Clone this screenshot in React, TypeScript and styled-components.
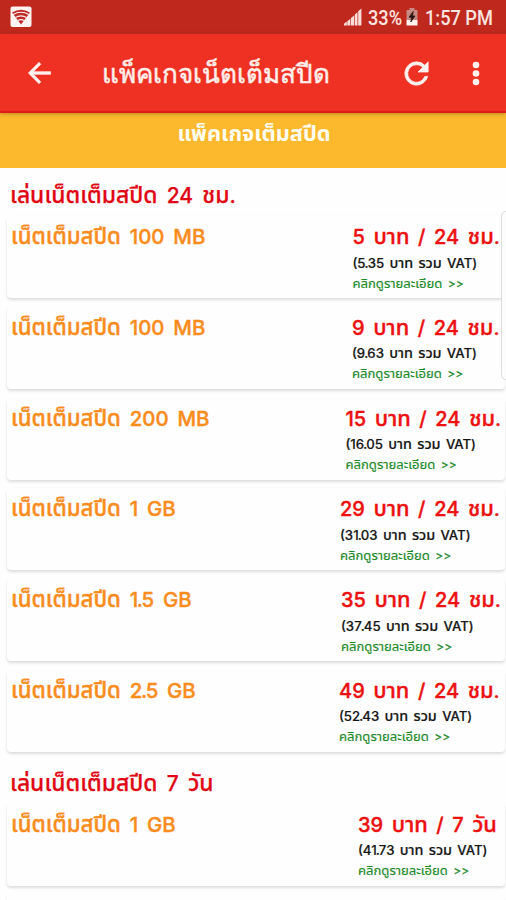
import React from "react";
import styled, { createGlobalStyle } from "styled-components";

const Global = createGlobalStyle`
  * { box-sizing: border-box; }
  body { margin: 0; background: #fff; overflow: hidden; font-family: Inter, "Noto Sans Thai", sans-serif; }
`;

const Screen = styled.div`
  position: relative;
  width: 506px;
  height: 900px;
  overflow: hidden;
  background: #fefefe;
`;

const StatusBar = styled.header`
  height: 34px;
  padding: 0 13px 0 10px;
  background: #be281d;
  display: flex;
  align-items: center;
  color: #fbe4e0;
`;

const StatusSpacer = styled.div`
  flex: 1;
`;

const StatusText = styled.span<{ $width: number }>`
  width: ${(p) => p.$width}px;
  font: 500 20px/34px Roboto, sans-serif;
  white-space: nowrap;
  padding-top: 2px;
  transform: scaleX(0.91);
  transform-origin: 0 50%;
`;

const StatusIcon = styled.svg<{ $gap: number }>`
  display: block;
  flex: none;
  margin-right: ${(p) => p.$gap}px;
`;

const AppBar = styled.nav`
  position: relative;
  z-index: 1;
  height: 79px;
  background: #ef3124;
  border-bottom: 2px solid #e01a1c;
  box-shadow: 0 1px 4px rgba(90, 60, 0, 0.4);
  display: flex;
  align-items: center;
  padding: 1px 24px 0 23px;
`;

const IconButton = styled.button`
  border: 0;
  padding: 0;
  background: none;
  display: flex;
  color: #fff1ef;
`;

const Title = styled.h1`
  flex: 1;
  margin: 2px 0 0 47px;
  font: 400 26px/40px Roboto, sans-serif;
  color: #ffeeea;
  white-space: nowrap;
  -webkit-text-stroke: 0.5px #ffeeea;
`;

const Actions = styled.div`
  display: flex;
  gap: 36px;
`;

const Banner = styled.div`
  height: 55px;
  background: #fdb92e;
  color: #fffdf0;
  text-align: center;
  font-size: 21.8px;
  font-weight: 700;
  line-height: 40px;
  padding-left: 2px;
`;

const Section = styled.section`
  padding-left: 7px;
`;

const Heading = styled.h2`
  margin: 0;
  height: 48px;
  padding: 7px 0 0 3px;
  font-size: 21px;
  font-weight: 500;
  line-height: 40px;
  word-spacing: 3.6px;
  color: #e10613;
  white-space: nowrap;
  -webkit-text-stroke: 0.25px #e10613;
`;

const Cards = styled.div`
  display: flex;
  flex-direction: column;
  gap: 8.8px;
  margin-bottom: 4px;
`;

const Card = styled.article`
  height: 82px;
  width: 498px;
  border-radius: 4px;
  background: #fefefe;
  box-shadow: 0 2px 3px rgba(0, 0, 0, 0.13), 0 0 2px rgba(0, 0, 0, 0.02);
  display: flex;
  justify-content: space-between;
  padding: 0 0 0 4px;
`;

const Name = styled.div`
  font-size: 20.4px;
  font-weight: 500;
  line-height: 40px;
  word-spacing: 3.4px;
  color: #f98c1d;
  white-space: nowrap;
  -webkit-text-stroke: 0.4px #f98c1d;
`;

const Offer = styled.div<{ $width: number }>`
  width: ${(p) => p.$width}px;
  flex: none;
  display: flex;
  flex-direction: column;
  white-space: nowrap;
`;

const Price = styled.div`
  height: 36.5px;
  font-size: 20px;
  font-weight: 500;
  line-height: 40px;
  word-spacing: 3.3px;
  color: #ec1010;
  -webkit-text-stroke: 0.4px #ec1010;
`;

const Vat = styled.div`
  height: 20px;
  font-size: 13.2px;
  font-weight: 500;
  line-height: 20px;
  word-spacing: 1.8px;
  color: #161616;
  -webkit-text-stroke: 0.2px #161616;
`;

const Details = styled.a`
  height: 20px;
  font-size: 12px;
  line-height: 20px;
  word-spacing: 2px;
  color: #1f8a2b;
  -webkit-text-stroke: 0.2px #1f8a2b;
`;

const Thai = styled.span`
  font-size: 1.09em;
`;

const Point = styled.span`
  margin: 0 -0.07em;
`;

const ScrollThumb = styled.div`
  position: absolute;
  left: 501px;
  top: 211px;
  width: 12px;
  height: 169px;
  border: 1px solid #dcdcdc;
  border-radius: 5px;
  background: #fcfcfc;
`;

function Mixed({ text }: { text: string }) {
  return (
    <>
      {text.split(/([\u0E00-\u0E7F]+|\.(?=\d))/).map((part, i) => {
        if (i % 2 === 0) return part;
        return part === "." ? <Point key={i}>.</Point> : <Thai key={i}>{part}</Thai>;
      })}
    </>
  );
}

type Plan = { name: string; price: string; vat: string; width: number };

const day: Plan[] = [
  { name: "100 MB", price: "5 บาท / 24 ชม.", vat: "5.35", width: 152.5 },
  { name: "100 MB", price: "9 บาท / 24 ชม.", vat: "9.63", width: 153 },
  { name: "200 MB", price: "15 บาท / 24 ชม.", vat: "16.05", width: 159.5 },
  { name: "1 GB", price: "29 บาท / 24 ชม.", vat: "31.03", width: 165 },
  { name: "1.5 GB", price: "35 บาท / 24 ชม.", vat: "37.45", width: 164 },
  { name: "2.5 GB", price: "49 บาท / 24 ชม.", vat: "52.43", width: 166 },
];
const week: Plan[] = [
  { name: "1 GB", price: "39 บาท / 7 วัน", vat: "41.73", width: 147 },
];

function PlanCard({ plan }: { plan: Plan }) {
  return (
    <Card>
      <Name><Mixed text={`เน็ตเต็มสปีด ${plan.name}`} /></Name>
      <Offer $width={plan.width}>
        <Price><Mixed text={plan.price} /></Price>
        <Vat><Mixed text={`(${plan.vat} บาท รวม VAT)`} /></Vat>
        <Details><Mixed text="คลิกดูรายละเอียด >>" /></Details>
      </Offer>
    </Card>
  );
}

export default function App() {
  return (
    <Screen>
      <Global />
      <StatusBar>
        <StatusIcon $gap={0} width="22" height="22" viewBox="0 0 22 22">
          <rect x="0.5" y="0.5" width="21" height="20.5" rx="2" fill="#fff4f1" />
          <path d="M2 6.6Q11 0.8 20 6.6L11 18.6Z" fill="#bd2c2a" />
          <path d="M3 8.4Q11 4 19 8.4M5.2 11.6Q11 8.2 16.8 11.6M7.6 14.6Q11 12.6 14.4 14.6" fill="none" stroke="#fff4f1" strokeWidth="1.1" />
        </StatusIcon>
        <StatusSpacer />
        <StatusIcon $gap={6} width="19" height="18" viewBox="0 0 19 18">
          <path d="M1 17.5V15.8L3.8 13.6V17.5ZM4.3 17.5V13.2L7.4 10.8V17.5ZM8 17.5V10L11.1 7.4V17.5ZM11.8 17.5V6.6L14.5 4.2V17.5ZM15.2 17.5V3.2L18.4 0.4V17.5Z" fill="#f8ddd9" />
        </StatusIcon>
        <StatusText $width={38}>33%</StatusText>
        <StatusIcon $gap={7} width="12" height="18" viewBox="0 0 12 18">
          <path d="M3.5 0H8.5V2H11.5V12H0.5V2H3.5Z" fill="#c98a83" />
          <path d="M0.5 12H11.5V17.5H0.5Z" fill="#fff3f0" />
          <path d="M7.2 3.5L3 9.2H5.5L4.8 14L9 8H6.5Z" fill="#2b1512" stroke="#2b1512" strokeWidth="0.8" />
        </StatusIcon>
        <StatusText $width={68}>1:57 PM</StatusText>
      </StatusBar>
      <AppBar>
        <IconButton aria-label="Back">
          <svg width="32" height="32" viewBox="0 0 24 24">
            <path d="M20.7 11H7.8l5.6-5.6L12 4l-8 8 8 8 1.4-1.4L7.8 13h12.9z" fill="currentColor" stroke="currentColor" strokeWidth="0.5" />
          </svg>
        </IconButton>
        <Title>แพ็คเกจเน็ตเต็มสปีด</Title>
        <Actions>
          <IconButton aria-label="Refresh">
            <svg width="35" height="35" viewBox="0 0 24 24">
              <path d="M17.65 6.35A7.96 7.96 0 0 0 12 4a8 8 0 1 0 7.73 10h-2.08A6 6 0 1 1 12 6c1.66 0 3.14.69 4.22 1.78L13 11h7V4z" fill="currentColor" stroke="currentColor" strokeWidth="0.5" />
            </svg>
          </IconButton>
          <IconButton aria-label="More">
            <svg width="12" height="35" viewBox="0 0 12 35">
              <circle cx="6" cy="9" r="3.3" fill="currentColor" />
              <circle cx="6" cy="17.5" r="3.3" fill="currentColor" />
              <circle cx="6" cy="26" r="3.3" fill="currentColor" />
            </svg>
          </IconButton>
        </Actions>
      </AppBar>
      <Banner>แพ็คเกจเต็มสปีด</Banner>
      <Section>
        <Heading><Mixed text="เล่นเน็ตเต็มสปีด 24 ชม." /></Heading>
        <Cards>{day.map((p) => <PlanCard key={p.price} plan={p} />)}</Cards>
      </Section>
      <Section>
        <Heading><Mixed text="เล่นเน็ตเต็มสปีด 7 วัน" /></Heading>
        <Cards>
          {week.map((p) => <PlanCard key={p.price} plan={p} />)}
          <Card />
        </Cards>
      </Section>
      <ScrollThumb />
    </Screen>
  );
}
